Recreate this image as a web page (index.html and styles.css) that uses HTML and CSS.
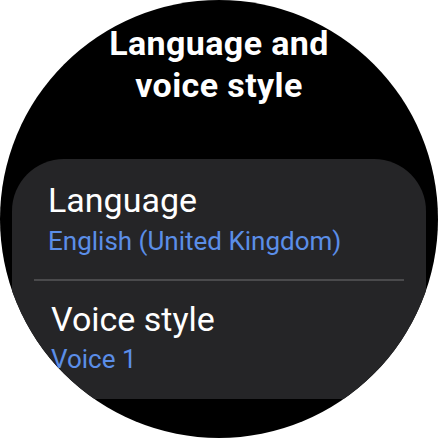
FILE: index.html
```html
<!DOCTYPE html>
<html>
<head>
<meta charset="utf-8">
<link rel="stylesheet" href="styles.css">
</head>
<body>
<div class="watch">
  <h1 class="title">Language and<br>voice style</h1>
  <div class="card">
    <div class="item item-first">
      <div class="item-label">Language</div>
      <div class="item-value">English (United Kingdom)</div>
    </div>
    <div class="divider"></div>
    <div class="item item-second">
      <div class="item-label">Voice style</div>
      <div class="item-value">Voice 1</div>
    </div>
  </div>
</div>
</body>
</html>
```
FILE: styles.css
```css
html, body {
  margin: 0;
  padding: 0;
  background: #ffffff;
}
.watch {
  width: 438px;
  height: 438px;
  border-radius: 50%;
  background: #000000;
  overflow: hidden;
  font-family: Roboto, "Liberation Sans", sans-serif;
  color: #ffffff;
}
.title {
  margin: 0;
  padding-top: 22px;
  font-size: 34px;
  line-height: 42px;
  font-weight: 700;
  text-align: center;
  letter-spacing: 0.4px;
}
.card {
  margin: 53px 12px 0 12px;
  height: 240px;
  background: #252527;
  border-radius: 52px 52px 0 0;
  padding-top: 21px;
  box-sizing: border-box;
}
.item-first {
  padding-left: 36px;
}
.item-second {
  padding-left: 39px;
  padding-top: 18px;
}
.item-label {
  font-size: 34px;
  line-height: 40px;
  font-weight: 400;
}
.item-value {
  margin-top: 6px;
  font-size: 26px;
  line-height: 30px;
  color: #5b8ee8;
}
.item-second .item-value {
  margin-top: 5px;
}
.divider {
  margin: 23px 22px 0 22px;
  height: 2px;
  background: #4a4a4c;
}
```
